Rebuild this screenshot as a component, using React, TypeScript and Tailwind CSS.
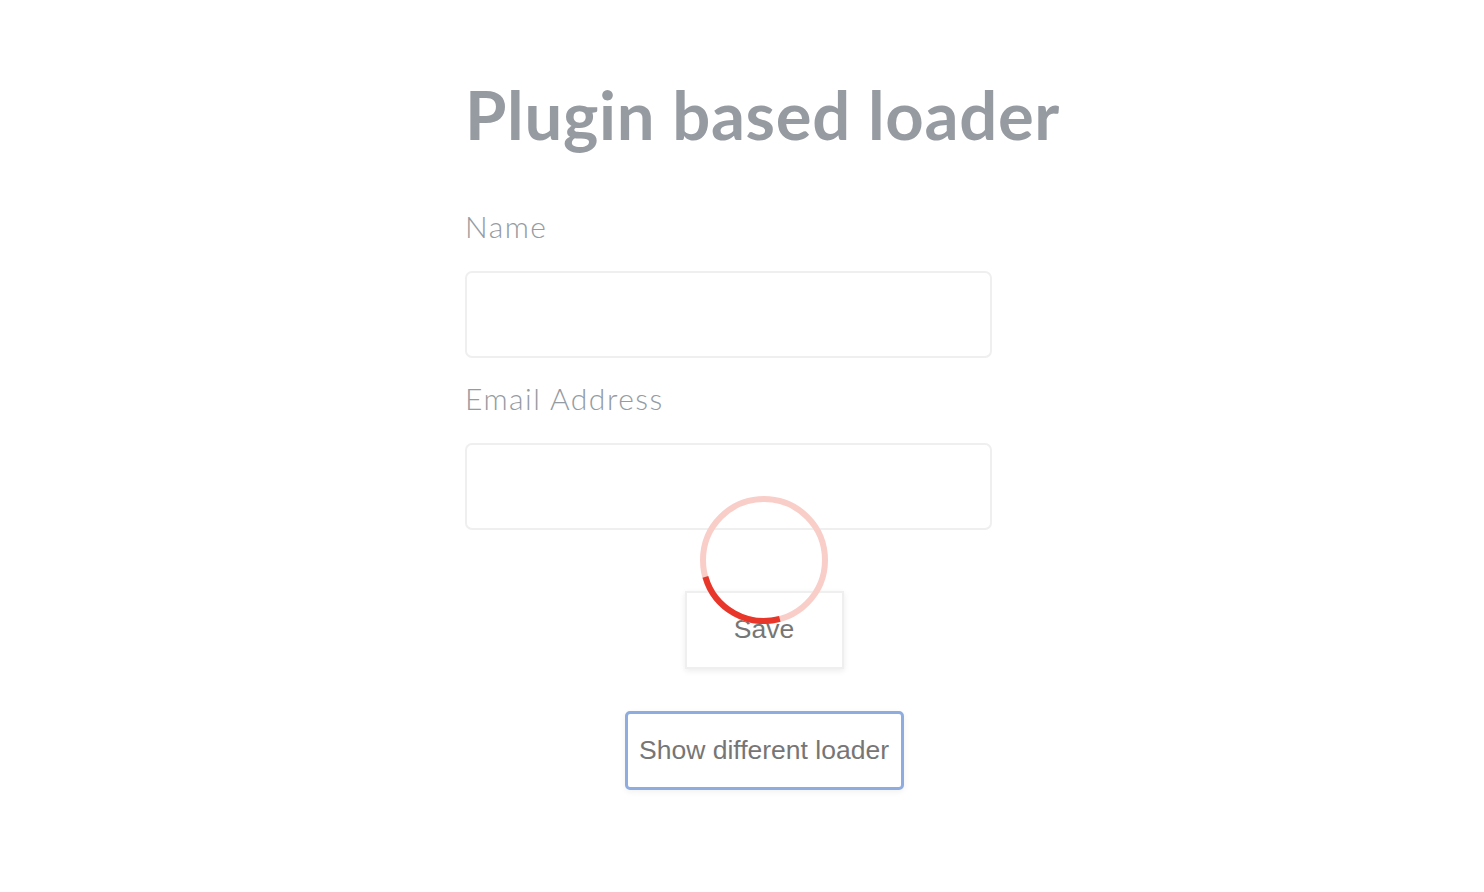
import React from 'react';

const Spinner: React.FC = () => (
  <svg width="128" height="128" viewBox="0 0 128 128" className="absolute left-1/2 top-[-95px] -translate-x-1/2 pointer-events-none">
    <circle cx="64" cy="64" r="61" fill="none" stroke="#f9cec9" strokeWidth="6" />
    <path d="M 79.8 122.9 A 61 61 0 0 1 5.4 80.8" fill="none" stroke="#e8372a" strokeWidth="6" />
  </svg>
);

const Field: React.FC<{ label: string; top: string }> = ({ label, top }) => (
  <div className={top}>
    <label className="block text-[30px] leading-[34px] font-light tracking-[1.5px] text-[#959ba2] font-['Lato',sans-serif]">{label}</label>
    <input className="mt-[28px] block w-[527px] h-[87px] rounded-[7px] border-2 border-[#efefef] bg-white outline-none" />
  </div>
);

export default function App() {
  return (
    <div className="min-h-screen bg-white">
      <div className="pl-[465px] pt-[74px]">
        <div className="w-[598px]">
          <h1 className="text-[67px] leading-[80px] font-bold text-[#969ba2] font-['Lato',sans-serif] tracking-[0.7px]">
            Plugin based loader
          </h1>
          <Field label="Name" top="mt-[55px]" />
          <Field label="Email Address" top="mt-[23px]" />
          <div className="flex flex-col items-center mt-[61px]">
            <div className="relative">
              <button className="w-[159px] h-[78px] bg-white border-2 border-[#efefef] shadow-[0_2px_6px_rgba(0,0,0,0.08)] text-[26.5px] text-[#767676] font-['Liberation_Sans',Arial,sans-serif]">
                Save
              </button>
              <Spinner />
            </div>
            <button className="mt-[42px] w-[279px] h-[79px] bg-white rounded-[5px] border-[3px] border-[#8eace0] shadow-[0_2px_6px_rgba(0,0,0,0.06)] text-[26.5px] text-[#767676] font-['Liberation_Sans',Arial,sans-serif]">
              Show different loader
            </button>
          </div>
        </div>
      </div>
    </div>
  );
}
